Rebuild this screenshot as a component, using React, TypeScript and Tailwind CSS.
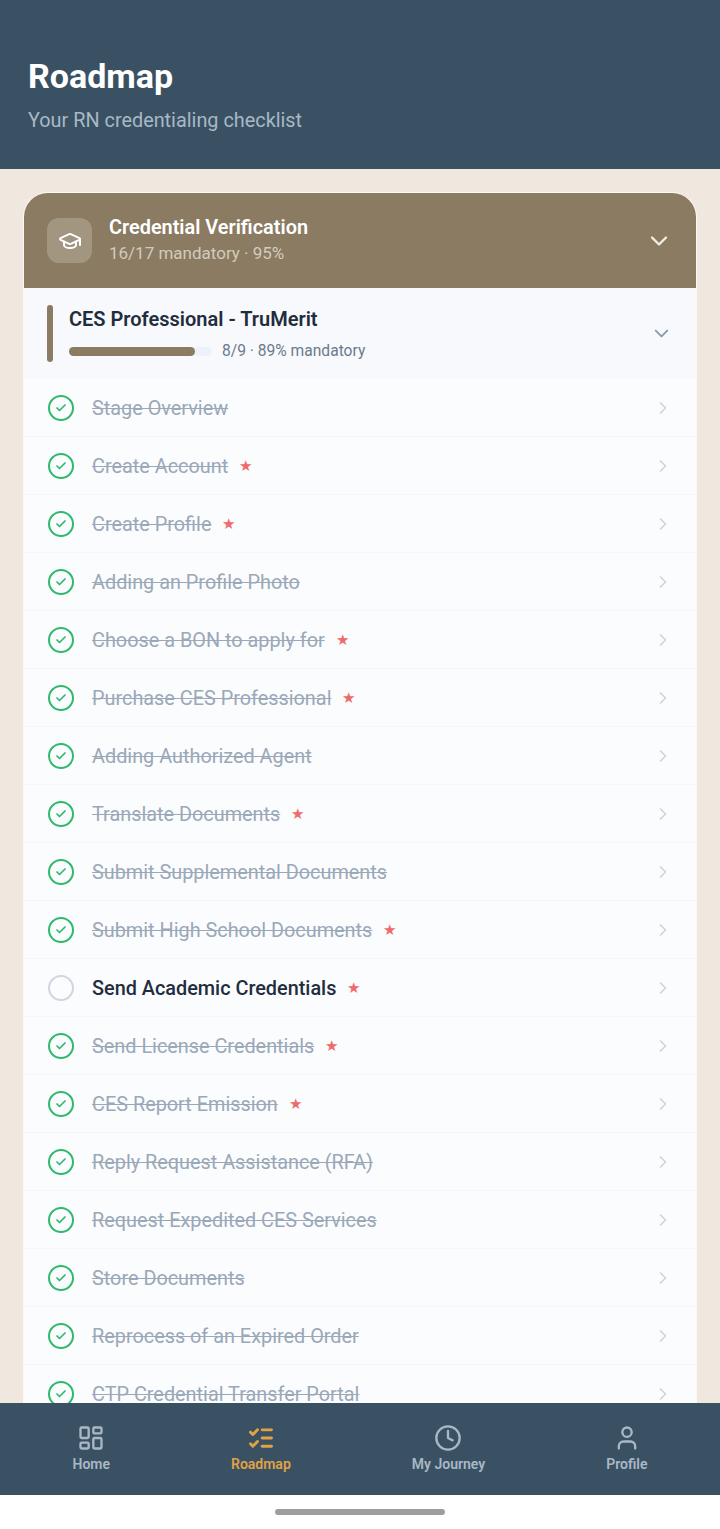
import { Check, ChevronDown, ChevronRight, Clock, GraduationCap, LayoutDashboard, ListChecks, User } from "lucide-react";

const steps = [
  { label: "Stage Overview", done: true, required: false },
  { label: "Create Account", done: true, required: true },
  { label: "Create Profile", done: true, required: true },
  { label: "Adding an Profile Photo", done: true, required: false },
  { label: "Choose a BON to apply for", done: true, required: true },
  { label: "Purchase CES Professional", done: true, required: true },
  { label: "Adding Authorized Agent", done: true, required: false },
  { label: "Translate Documents", done: true, required: true },
  { label: "Submit Supplemental Documents", done: true, required: false },
  { label: "Submit High School Documents", done: true, required: true },
  { label: "Send Academic Credentials", done: false, required: true },
  { label: "Send License Credentials", done: true, required: true },
  { label: "CES Report Emission", done: true, required: true },
  { label: "Reply Request Assistance (RFA)", done: true, required: false },
  { label: "Request Expedited CES Services", done: true, required: false },
  { label: "Store Documents", done: true, required: false },
  { label: "Reprocess of an Expired Order", done: true, required: false },
  { label: "CTP Credential Transfer Portal", done: true, required: false },
];

function StepRow({ label, done, required }: { label: string; done: boolean; required: boolean }) {
  return (
    <div className="flex h-[58px] shrink-0 items-center border-b border-[#f4f6f9] pl-[24px] pr-[23px]">
      {done ? (
        <span className="flex h-[26px] w-[26px] shrink-0 items-center justify-center rounded-full border-[2.5px] border-[#2fb96c]">
          <Check className="h-[12px] w-[12px] text-[#2fb96c]" strokeWidth={3.5} />
        </span>
      ) : (
        <span className="h-[26px] w-[26px] shrink-0 rounded-full border-[2.5px] border-[#cfd5e1]" />
      )}
      <span
        className={
          done
            ? "ml-[18px] mt-[2px] text-[19.85px] leading-[24px] text-[#9aa8b8] line-through"
            : "ml-[18px] mt-[2px] text-[19.85px] leading-[24px] font-medium text-[#1f2d3d]"
        }
      >
        {label}
      </span>
      {required && <span className="ml-[11px] text-[15px] leading-[24px] text-[#ef6a6a]">★</span>}
      <ChevronRight className="ml-auto h-[20px] w-[20px] shrink-0 text-[#cdd4dc]" strokeWidth={2} />
    </div>
  );
}

function NavItem({ label, active, children }: { label: string; active?: boolean; children: React.ReactNode }) {
  return (
    <div
      className={
        active
          ? "flex flex-col items-center gap-[2px] text-[#e0a243]"
          : "flex flex-col items-center gap-[2px] text-[#a9b8c6]"
      }
    >
      {children}
      <span className="text-[14px] leading-[20px] font-semibold">{label}</span>
    </div>
  );
}

export default function App() {
  return (
    <div className="flex h-[1529px] w-[720px] flex-col overflow-hidden bg-white font-['Roboto',sans-serif]">
      {/* Page title */}
      <header className="h-[169px] shrink-0 bg-[#3a5164] px-[28px] pt-[56px]">
        <h1 className="text-[34px] leading-[40px] font-bold text-white">Roadmap</h1>
        <p className="mt-[12px] text-[19.85px] leading-[26px] text-[#a9b8c6]">Your RN credentialing checklist</p>
      </header>

      <main className="min-h-0 flex-1 overflow-hidden bg-[#f0e8df] px-[24px] pt-[24px]">
        <section className="overflow-hidden rounded-t-[24px] bg-[#fbfcfe] ring-1 ring-white/70">
          <div className="flex h-[95px] items-center bg-[#8a7b62] pl-[23px] pr-[23px]">
            <div className="flex h-[45px] w-[45px] items-center justify-center rounded-[12px] bg-[#a39680]">
              <GraduationCap className="h-[24px] w-[24px] text-white" strokeWidth={2} />
            </div>
            <div className="ml-[17px] pb-[2px]">
              <div className="text-[19.9px] leading-[26px] font-semibold text-white">Credential Verification</div>
              <div className="text-[17px] leading-[24px] text-[#d3cbbd]">16/17 mandatory · 95%</div>
            </div>
            <ChevronDown className="ml-auto h-[28px] w-[28px] text-[#f3eee4]" strokeWidth={2} />
          </div>

          <div className="flex h-[91px] items-center bg-[#f8f9fc] pl-[23px] pr-[23px]">
            <div className="h-[57px] w-[6px] rounded-full bg-[#8a7b62]" />
            <div className="ml-[16px]">
              <div className="text-[20px] leading-[26px] font-semibold text-[#1f2d3d]">CES Professional - TruMerit</div>
              <div className="mt-[9px] flex items-center">
                <div className="h-[9px] w-[143px] rounded-full bg-[#eef1f7]">
                  <div className="h-[9px] w-[126px] rounded-full bg-[#8a7b62]" />
                </div>
                <span className="ml-[10px] text-[15.6px] leading-[20px] text-[#6b7a8c]">8/9 · 89% mandatory</span>
              </div>
            </div>
            <ChevronDown className="ml-auto h-[23px] w-[23px] text-[#8c9cae]" strokeWidth={2} />
          </div>

          <div className="flex flex-col">
            {steps.map((step) => (
              <StepRow key={step.label} {...step} />
            ))}
          </div>
        </section>
      </main>

      <nav className="flex h-[92px] shrink-0 items-start justify-around bg-[#3a5164] px-[12px] pt-[21px]">
        <NavItem label="Home">
          <LayoutDashboard className="h-[28px] w-[28px]" strokeWidth={2} />
        </NavItem>
        <NavItem label="Roadmap" active>
          <ListChecks className="h-[28px] w-[28px]" strokeWidth={2.5} />
        </NavItem>
        <NavItem label="My Journey">
          <Clock className="h-[28px] w-[28px]" strokeWidth={2} />
        </NavItem>
        <NavItem label="Profile">
          <User className="h-[28px] w-[28px]" strokeWidth={2} />
        </NavItem>
      </nav>

      {/* Gesture bar */}
      <div className="flex h-[34px] shrink-0 items-center justify-center bg-white">
        <div className="h-[6px] w-[170px] rounded-full bg-[#9e9e9e]" />
      </div>
    </div>
  );
}
